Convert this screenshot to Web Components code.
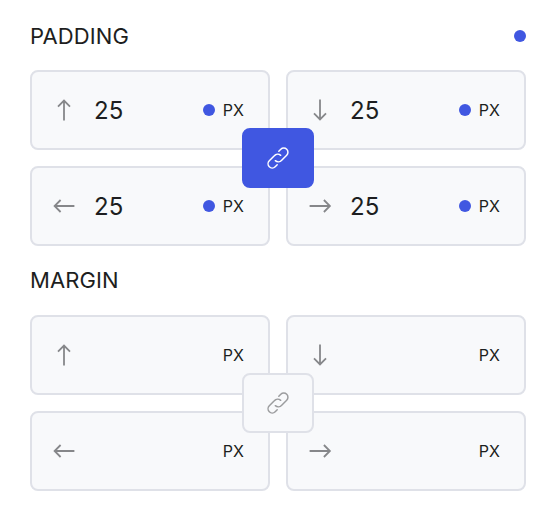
<!DOCTYPE html>
<html lang="en">
<head>
<meta charset="utf-8">
<title>Spacing</title>
<style>
  body {
    margin: 0;
    background: #fff;
    color: #1d1e20;
    font-family: Inter, "Liberation Sans", sans-serif;
    --accent: #4057e1;
    --surface: #f8f9fb;
    --line: #dfe1e8;
    --icon: #86878a;
  }
</style>
</head>
<body>
<spacing-panel>
  <spacing-group label="PADDING" changed linked>
    <spacing-field side="up" value="25"></spacing-field>
    <spacing-field side="down" value="25"></spacing-field>
    <spacing-field side="left" value="25"></spacing-field>
    <spacing-field side="right" value="25"></spacing-field>
  </spacing-group>
  <spacing-group label="MARGIN">
    <spacing-field side="up"></spacing-field>
    <spacing-field side="down"></spacing-field>
    <spacing-field side="left"></spacing-field>
    <spacing-field side="right"></spacing-field>
  </spacing-group>
</spacing-panel>

<script>
class SpacingPanel extends HTMLElement {
  constructor() {
    super();
    this.attachShadow({ mode: 'open' });
    this.shadowRoot.innerHTML = `
      <style>
        :host {
          display: flex;
          flex-direction: column;
          gap: 16px;
          box-sizing: border-box;
          width: 558px;
          padding: 18px 32px 33px 30px;
        }
        ::slotted(:not(:first-child)) {
          --header-gap: 17px;
        }
      </style>
      <slot></slot>
    `;
  }
}

class ChangeDot extends HTMLElement {
  constructor() {
    super();
    this.attachShadow({ mode: 'open' });
    this.shadowRoot.innerHTML = `
      <style>
        :host {
          display: block;
          flex: none;
          width: 12px;
          height: 12px;
          border-radius: 50%;
          background: var(--accent);
        }
      </style>
    `;
  }
}

class SideArrow extends HTMLElement {
  constructor() {
    super();
    this.attachShadow({ mode: 'open' });
  }

  connectedCallback() {
    const paths = {
      up: 'M12 22.4V2.6M6 8.6l6-6 6 6',
      down: 'M12 1.6V21.4M6 15.4l6 6 6-6',
      left: 'M22.4 12H2.6M8.6 6l-6 6 6 6',
      right: 'M1.6 12H21.9M15.9 6l6 6-6 6'
    };
    this.shadowRoot.innerHTML = `
      <style>
        :host {
          display: block;
          flex: none;
          width: 24px;
          height: 24px;
        }
        svg {
          display: block;
        }
      </style>
      <svg width="24" height="24" viewBox="0 0 24 24" fill="none" stroke="var(--icon)" stroke-width="1.8">
        <path d="${paths[this.getAttribute('side')]}"/>
      </svg>
    `;
  }
}

class LinkToggle extends HTMLElement {
  constructor() {
    super();
    this.attachShadow({ mode: 'open' });
    this.shadowRoot.innerHTML = `
      <style>
        :host {
          display: flex;
          align-items: center;
          justify-content: center;
          box-sizing: border-box;
          width: 72px;
          height: 60px;
          border: 2px solid var(--line);
          border-radius: 8px;
          background: var(--surface);
          color: #9b9c9e;
        }
        :host([active]) {
          border-color: var(--accent);
          background: var(--accent);
          color: #fff;
        }
      </style>
      <svg width="24" height="24" viewBox="0 0 24 24" fill="none" stroke="currentColor" stroke-width="1.5" stroke-linecap="round" stroke-linejoin="round">
        <path d="M12.8 5.3l2-2a4.1 4.1 0 0 1 5.9 5.9l-5 5a4.6 4.6 0 0 1-6.4.5"/>
        <path d="M11.2 18.7l-2 2a4.1 4.1 0 0 1-5.9-5.9l5-5a4.6 4.6 0 0 1 6.4-.5"/>
      </svg>
    `;
  }
}

class SpacingField extends HTMLElement {
  constructor() {
    super();
    this.attachShadow({ mode: 'open' });
  }

  connectedCallback() {
    const value = this.getAttribute('value') || '';
    this.shadowRoot.innerHTML = `
      <style>
        :host {
          display: flex;
          align-items: center;
          box-sizing: border-box;
          height: 80px;
          padding: 0 24px 0 20px;
          border: 2px solid var(--line);
          border-radius: 8px;
          background: var(--surface);
        }
        .value {
          flex: 1;
          margin-left: 18px;
          padding-top: 2px;
          font-size: 24px;
          line-height: 32px;
        }
        .unit {
          margin-left: 8px;
          font-size: 16px;
          line-height: 24px;
        }
      </style>
      <side-arrow side="${this.getAttribute('side')}"></side-arrow>
      <span class="value">${value}</span>
      ${value ? '<change-dot></change-dot>' : ''}
      <span class="unit">PX</span>
    `;
  }
}

class SpacingGroup extends HTMLElement {
  constructor() {
    super();
    this.attachShadow({ mode: 'open' });
  }

  connectedCallback() {
    this.shadowRoot.innerHTML = `
      <style>
        :host {
          display: block;
        }
        header {
          display: flex;
          align-items: center;
          justify-content: space-between;
          height: 36px;
          margin-bottom: var(--header-gap, 16px);
          font-size: 22px;
          line-height: 36px;
          letter-spacing: 0.1px;
        }
        .fields {
          position: relative;
          display: grid;
          grid-template-columns: 1fr 1fr;
          gap: 16px;
        }
        /* sits over the corner where the four fields meet */
        link-toggle {
          position: absolute;
          top: 50%;
          left: 50%;
          transform: translate(-50%, -50%);
        }
      </style>
      <header>
        <span>${this.getAttribute('label')}</span>
        ${this.hasAttribute('changed') ? '<change-dot></change-dot>' : ''}
      </header>
      <div class="fields">
        <slot></slot>
        <link-toggle ${this.hasAttribute('linked') ? 'active' : ''}></link-toggle>
      </div>
    `;
  }
}

customElements.define('change-dot', ChangeDot);
customElements.define('side-arrow', SideArrow);
customElements.define('link-toggle', LinkToggle);
customElements.define('spacing-field', SpacingField);
customElements.define('spacing-group', SpacingGroup);
customElements.define('spacing-panel', SpacingPanel);
</script>
</body>
</html>
